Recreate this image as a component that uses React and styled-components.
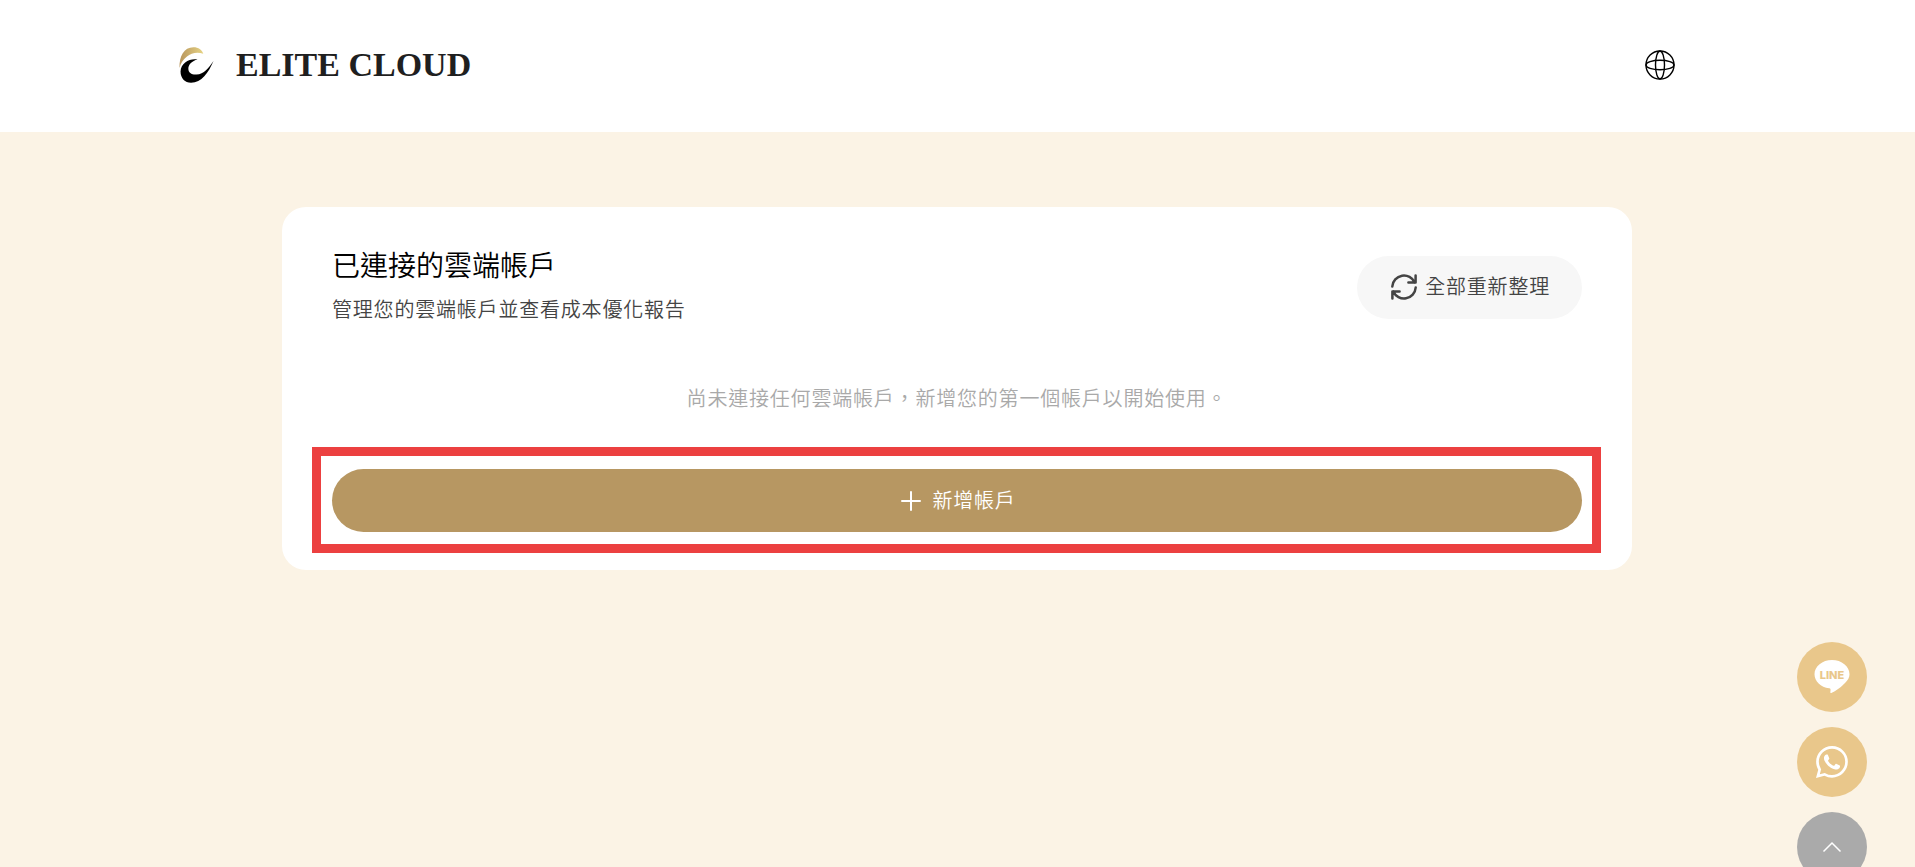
import React from 'react';
import styled, { createGlobalStyle } from 'styled-components';
import { BsWhatsapp } from 'react-icons/bs';

const GlobalStyle = createGlobalStyle`
  * {
    box-sizing: border-box;
  }

  body {
    background-color: #fbf3e5;
    color: #000;
    font-family: 'Noto Sans CJK TC', 'Noto Sans', sans-serif;
    font-size: 20px;
    font-weight: 350;
    letter-spacing: 0.04em;
    line-height: 30px;
    margin: 0;
  }
`;

const Header = styled.header`
  align-items: center;
  background-color: #fff;
  display: flex;
  height: 132px;
  justify-content: space-between;
  padding: 0 240px 2px 179px;
`;

const Brand = styled.a`
  align-items: center;
  color: #1f1f1f;
  display: flex;
  font-family: 'Liberation Serif', serif;
  font-size: 34px;
  font-weight: bold;
  gap: 22px;
  letter-spacing: normal;
  line-height: 40px;
  text-decoration: none;
`;

const IconButton = styled.button`
  background-color: transparent;
  border: 0;
  cursor: pointer;
  display: flex;
  padding: 0;
`;

const Main = styled.main`
  margin: 0 auto;
  max-width: 1351px;
  padding: 75px 1px 75px 0;
`;

const Card = styled.section`
  background-color: #fff;
  border-radius: 24px;
  padding: 39px 50px 38px;
`;

const CardHeader = styled.div`
  align-items: center;
  display: flex;
  justify-content: space-between;
`;

const Title = styled.h1`
  font-size: 28px;
  font-weight: inherit;
  letter-spacing: normal;
  line-height: 36px;
  margin: 0 0 12px;
`;

const Subtitle = styled.p`
  color: #444;
  margin: 0 0 4px;
`;

const Empty = styled.p`
  color: #a9a9a9;
  margin: 0;
  padding: 55px 0 56px;
  text-align: center;
`;

const Button = styled.button`
  align-items: center;
  background-color: ${({ $primary }) =>
    $primary ? '#b79762' : '#f7f7f7'};
  border: 0;
  border-radius: 32px;
  color: ${({ $primary }) => ($primary ? '#fff' : '#444')};
  cursor: pointer;
  display: flex;
  font: inherit;
  gap: ${({ $primary }) => ($primary ? '10px' : '8px')};
  height: 63px;
  justify-content: center;
  letter-spacing: inherit;
  padding: 0 32px 2px;
  width: ${({ $primary }) => ($primary ? '100%' : 'auto')};
`;

const Highlight = styled.div`
  position: relative;

  &::after {
    border: 9px solid #ec4040;
    content: '';
    inset: -22px -19px -21px -20px;
    pointer-events: none;
    position: absolute;
  }
`;

const Floating = styled.nav`
  bottom: -15px;
  display: flex;
  flex-direction: column;
  gap: 15px;
  position: fixed;
  right: 48px;
`;

const Round = styled.a`
  align-items: center;
  background-color: ${({ $muted }) =>
    $muted ? '#aaa' : '#e9c78b'};
  border-radius: 50%;
  color: #fff;
  display: flex;
  height: 70px;
  justify-content: center;
  width: 70px;
`;

const LogoMark = () => (
  <svg width="35" height="36" viewBox="28 22 102 106" aria-hidden="true">
    <defs>
      <linearGradient id="gold" x1="0" y1="0" x2="1" y2="0">
        <stop offset="0" stopColor="#b8955c" />
        <stop offset="1" stopColor="#e6d384" />
      </linearGradient>
    </defs>
    <path
      fill="url(#gold)"
      d="M29 84C28 50 42 23 70 23c15 0 25 8 29 19-18-6-36-2-48 8-12 10-19 20-22 34z"
    />
    <path d="M82 59C60 55 33 68 32 94c0 20 13 33 31 33 31 0 51-29 66-64-14 21-28 39-50 40-14 1-24-5-24-17s11-23 27-27z" />
  </svg>
);

const GlobeIcon = () => (
  <svg
    width="30"
    height="30"
    viewBox="0 0 30 30"
    fill="none"
    stroke="#000"
    strokeWidth="1.4"
    aria-hidden="true"
  >
    <circle cx="15" cy="15" r="14" />
    <ellipse cx="15" cy="15" rx="4.5" ry="14" />
    <ellipse cx="15" cy="15" rx="14" ry="4.7" />
  </svg>
);

const RefreshIcon = () => (
  <svg
    width="28"
    height="28"
    viewBox="-1 -1 28 28"
    fill="none"
    stroke="currentColor"
    strokeWidth="2.5"
    strokeLinecap="round"
    strokeLinejoin="round"
    aria-hidden="true"
  >
    <path d="M2.3 13.5A11.7 11.7 0 0 1 24.7 9.6M18.4 9.6h7.2V2.6" />
    <path d="M25.7 14.5A11.7 11.7 0 0 1 3.3 18.4M9.6 18.4H2.4v7" />
  </svg>
);

const PlusIcon = () => (
  <svg
    width="24"
    height="24"
    viewBox="-1 -1 24 24"
    stroke="currentColor"
    strokeWidth="2"
    strokeLinecap="round"
    aria-hidden="true"
  >
    <path d="M12 3v18M3 12h18" />
  </svg>
);

const LineIcon = () => (
  <svg width="36" height="34" viewBox="0 0 36 34" aria-hidden="true">
    <path
      fill="#fff"
      d="M18 0C8.3 0 .5 6.3.5 14.2c0 7.1 6.2 13 14.700 14 1.600.3 1.500 1.200 1.200 3.200-.2 1.500.2 2 1.400 1.400C22 30.700 27.800 26.600 31 23c3-3.100 4.500-5.600 4.500-8.800C35.500 6.300 27.700 0 18 0z"
    />
    <text
      x="18"
      y="18.5"
      fill="#e9c78b"
      fontFamily="Inter, sans-serif"
      fontSize="11"
      fontWeight="800"
      letterSpacing="0"
      textAnchor="middle"
    >
      LINE
    </text>
  </svg>
);

const ChevronIcon = () => (
  <svg
    width="20"
    height="12"
    viewBox="0 0 20 12"
    fill="none"
    stroke="currentColor"
    strokeWidth="1.5"
    aria-hidden="true"
  >
    <path d="M1.5 10.5 10 2l8.500 8.500" />
  </svg>
);

const App = () => (
  <>
    <GlobalStyle />
    <Header>
      <Brand href="#home">
        <LogoMark />
        ELITE CLOUD
      </Brand>
      <IconButton type="button" aria-label="語言">
        <GlobeIcon />
      </IconButton>
    </Header>
    <Main>
      <Card>
        <CardHeader>
          <div>
            <Title>已連接的雲端帳戶</Title>
            <Subtitle>管理您的雲端帳戶並查看成本優化報告</Subtitle>
          </div>
          <Button type="button">
            <RefreshIcon />
            全部重新整理
          </Button>
        </CardHeader>
        <Empty>
          尚未連接任何雲端帳戶，新增您的第一個帳戶以開始使用。
        </Empty>
        <Highlight>
          <Button type="button" $primary>
            <PlusIcon />
            新增帳戶
          </Button>
        </Highlight>
      </Card>
    </Main>
    <Floating>
      <Round href="#line" aria-label="LINE">
        <LineIcon />
      </Round>
      <Round href="#whatsapp" aria-label="WhatsApp">
        <BsWhatsapp size={32} />
      </Round>
      <Round href="#top" aria-label="回到頂端" $muted>
        <ChevronIcon />
      </Round>
    </Floating>
  </>
);

export default App;
